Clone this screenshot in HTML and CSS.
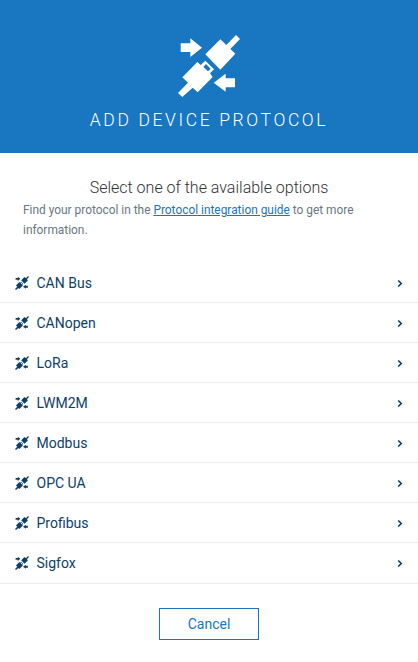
FILE: index.html
```html
<!DOCTYPE html>
<html lang="en">
<head>
<meta charset="utf-8">
<title>Add device protocol</title>
<link rel="stylesheet" href="styles.css">
</head>
<body>
<svg class="defs" aria-hidden="true">
  <symbol id="plug" viewBox="30 26 186 186">
    <path d="M112 84L157 39L175 56L204 26L216 38L187 68L202 82L157 130Z"/>
    <path fill-rule="evenodd" d="M43 153L88 107L98 116L112 103L138 129L126 141L134 152L89 198L74 184L43 212L30 200L60 169ZM114 113L106 122L120 135L128 127Z"/>
    <path d="M38 51H67V36L102 64L67 92V77H38Z"/>
    <path d="M201 156V183H173V196L137 169L173 142V156Z"/>
  </symbol>
  <symbol id="chevron" viewBox="0 0 6 7">
    <path d="M1.2 .5L4.3 3.5L1.2 6.5" fill="none" stroke="currentColor" stroke-width="1.6"/>
  </symbol>
</svg>
<main class="dialog">
  <header class="header">
    <svg class="header-icon"><use href="#plug"/></svg>
    <h1 class="title">Add device protocol</h1>
  </header>
  <section class="intro">
    <h2 class="subtitle">Select one of the available options</h2>
    <p class="hint">Find your protocol in the <a class="link" href="#">Protocol integration guide</a> to get more information.</p>
  </section>
  <ul class="list">
    <li class="item"><svg class="icon"><use href="#plug"/></svg><span class="name">CAN Bus</span><svg class="chevron"><use href="#chevron"/></svg></li>
    <li class="item"><svg class="icon"><use href="#plug"/></svg><span class="name">CANopen</span><svg class="chevron"><use href="#chevron"/></svg></li>
    <li class="item"><svg class="icon"><use href="#plug"/></svg><span class="name">LoRa</span><svg class="chevron"><use href="#chevron"/></svg></li>
    <li class="item"><svg class="icon"><use href="#plug"/></svg><span class="name">LWM2M</span><svg class="chevron"><use href="#chevron"/></svg></li>
    <li class="item"><svg class="icon"><use href="#plug"/></svg><span class="name">Modbus</span><svg class="chevron"><use href="#chevron"/></svg></li>
    <li class="item"><svg class="icon"><use href="#plug"/></svg><span class="name">OPC UA</span><svg class="chevron"><use href="#chevron"/></svg></li>
    <li class="item"><svg class="icon"><use href="#plug"/></svg><span class="name">Profibus</span><svg class="chevron"><use href="#chevron"/></svg></li>
    <li class="item"><svg class="icon"><use href="#plug"/></svg><span class="name">Sigfox</span><svg class="chevron"><use href="#chevron"/></svg></li>
  </ul>
  <footer class="footer"><button class="cancel" type="button">Cancel</button></footer>
</main>
</body>
</html>
```
FILE: styles.css
```css
* { box-sizing: border-box; }
body {
  margin: 0;
  background: #fff;
  color: #0e3f66;
  font: 14px/20px Roboto, sans-serif;
}
.defs { display: none; }
.dialog { height: 662px; overflow: hidden; }
.header {
  height: 153px;
  padding-top: 35px;
  background: #1976c0;
  color: #fff;
  text-align: center;
}
.header-icon { display: block; width: 62px; height: 62px; margin: 0 auto; fill: currentColor; }
.title {
  margin: 11px 0 0;
  font-size: 17.5px;
  font-weight: 300;
  line-height: 24px;
  letter-spacing: 2.62px;
  text-transform: uppercase;
}
.intro { height: 110px; padding: 24px 23px 0; }
.subtitle {
  margin: 0;
  color: #333;
  font-size: 16px;
  font-weight: 300;
  line-height: 22px;
  text-align: center;
}
.hint { margin: 1px 0 0; color: #6a7782; font-size: 11.9px; line-height: 20px; }
.link { color: #1776bf; text-decoration: underline; }
.list { margin: 0; padding: 0; list-style: none; border-bottom: 1px solid #ececec; }
.item {
  display: flex;
  align-items: center;
  height: 40px;
  padding: 0 15px;
  border-bottom: 1px solid #ececec;
}
.item:last-child { border-bottom-color: transparent; }
.icon { width: 14px; height: 14px; margin-right: 7.5px; fill: currentColor; }
.name { flex: 1; }
.chevron { width: 6px; height: 7px; margin-top: 2px; overflow: visible; }
.footer { display: flex; justify-content: center; padding-top: 24px; }
.cancel {
  width: 100px;
  height: 32px;
  padding: 0;
  border: 1px solid #1776bf;
  background: #fff;
  color: #1776bf;
  font: inherit;
}
```
